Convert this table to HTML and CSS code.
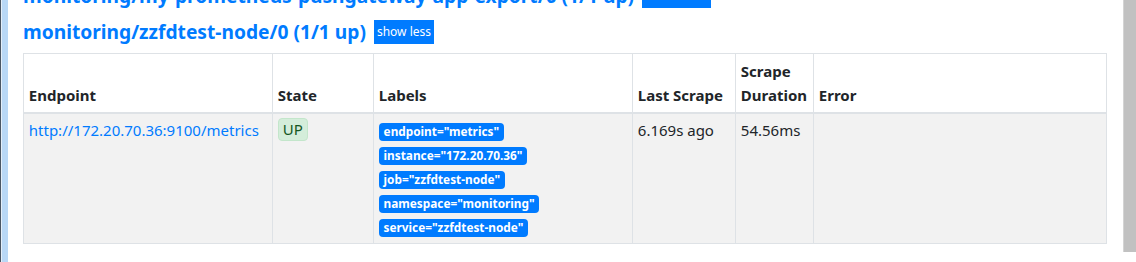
FILE: index.html
```html
<!DOCTYPE html>
<html lang="en">
<head>
<meta charset="utf-8">
<title>Targets</title>
<link rel="stylesheet" href="styles.css">
</head>
<body>
<div class="frame">
  <div class="edge"></div>
  <main class="content">
    <h2 class="job-header job-header-prev">
      <a class="job-link" href="#job-prev">monitoring/my-prometheus-pushgateway-app-export/0 (1/1 up)</a>
      <button type="button" class="toggle">show more</button>
    </h2>
    <h2 class="job-header">
      <a class="job-link" href="#job-node">monitoring/zzfdtest-node/0 (1/1 up)</a>
      <button type="button" class="toggle">show less</button>
    </h2>
    <table class="targets">
      <thead>
        <tr>
          <th class="c-endpoint">Endpoint</th>
          <th class="c-state">State</th>
          <th class="c-labels">Labels</th>
          <th class="c-last">Last Scrape</th>
          <th class="c-dur">Scrape Duration</th>
          <th class="c-err">Error</th>
        </tr>
      </thead>
      <tbody>
        <tr>
          <td><a class="endpoint" href="#">http://172.20.70.36:9100/metrics</a></td>
          <td><span class="state">UP</span></td>
          <td class="labels">
            <span class="badge">endpoint="metrics"</span><br>
            <span class="badge">instance="172.20.70.36"</span><br>
            <span class="badge">job="zzfdtest-node"</span><br>
            <span class="badge">namespace="monitoring"</span><br>
            <span class="badge">service="zzfdtest-node"</span>
          </td>
          <td>6.169s ago</td>
          <td>54.56ms</td>
          <td></td>
        </tr>
      </tbody>
    </table>
  </main>
  <div class="scrollbar"></div>
</div>
</body>
</html>
```

FILE: styles.css
```css
html, body {
  margin: 0;
  padding: 0;
  background: #ffffff;
}

body {
  font-family: "Noto Sans", "Open Sans", "Liberation Sans", sans-serif;
  font-size: 15px;
  line-height: 24px;
  color: #212529;
  height: 262px;
  overflow: hidden;
}

.frame {
  display: flex;
  align-items: flex-start;
  height: 262px;
}

.edge {
  width: 7px;
  height: 262px;
  flex: none;
  border-left: 1px solid #4a5664;
  background: linear-gradient(to right, #e4effa 0 1px, #b9d8f6 1px);
}

.content {
  flex: 1;
  padding-left: 15px;
  padding-right: 16px;
  margin-top: -28px;
}

.job-header {
  display: flex;
  align-items: center;
  gap: 8px;
  height: 24px;
  margin: 12px 0 0;
  font-size: 19.2px;
  font-weight: 700;
  line-height: 24px;
  white-space: nowrap;
}

.job-link {
  color: #007bff;
  text-decoration: none;
}

.toggle {
  height: 24px;
  padding: 0 3px;
  border: 0;
  border-radius: 0;
  background: #007bff;
  color: #ffffff;
  font-family: inherit;
  font-size: 12px;
  font-weight: 400;
  line-height: 24px;
}

.targets {
  margin-top: 9px;
  width: 1084px;
  border-collapse: collapse;
  table-layout: fixed;
  border: 1px solid #dee2e6;
}

.targets th,
.targets td {
  box-sizing: border-box;
  padding: 4.8px;
  border: 1px solid #dee2e6;
  text-align: left;
}

.targets th {
  vertical-align: bottom;
  border-bottom: 2px solid #dee2e6;
  font-weight: 700;
}

.targets td {
  vertical-align: top;
  background: #f2f2f2;
}

.c-endpoint { width: 249px; }
.c-state { width: 101px; }
.c-labels { width: 259px; }
.c-last { width: 103px; }
.c-dur { width: 78px; }
.c-err { width: auto; }

.endpoint {
  color: #007bff;
  text-decoration: none;
}

.state {
  display: inline-block;
  padding: 0 4px;
  line-height: 21px;
  border: 1px solid #c3e6cb;
  border-radius: 4px;
  background: #d4edda;
  color: #155724;
  vertical-align: top;
}

.badge {
  display: inline-block;
  padding: 3px 4.8px;
  font-size: 11.8px;
  font-weight: 700;
  line-height: 1;
  color: #ffffff;
  background: #007bff;
  border-radius: 4px;
  white-space: nowrap;
}

.scrollbar {
  width: 12px;
  height: 252px;
  flex: none;
  border-left: 1px solid #d4d4d4;
  background: #c1c1c1;
}
```
